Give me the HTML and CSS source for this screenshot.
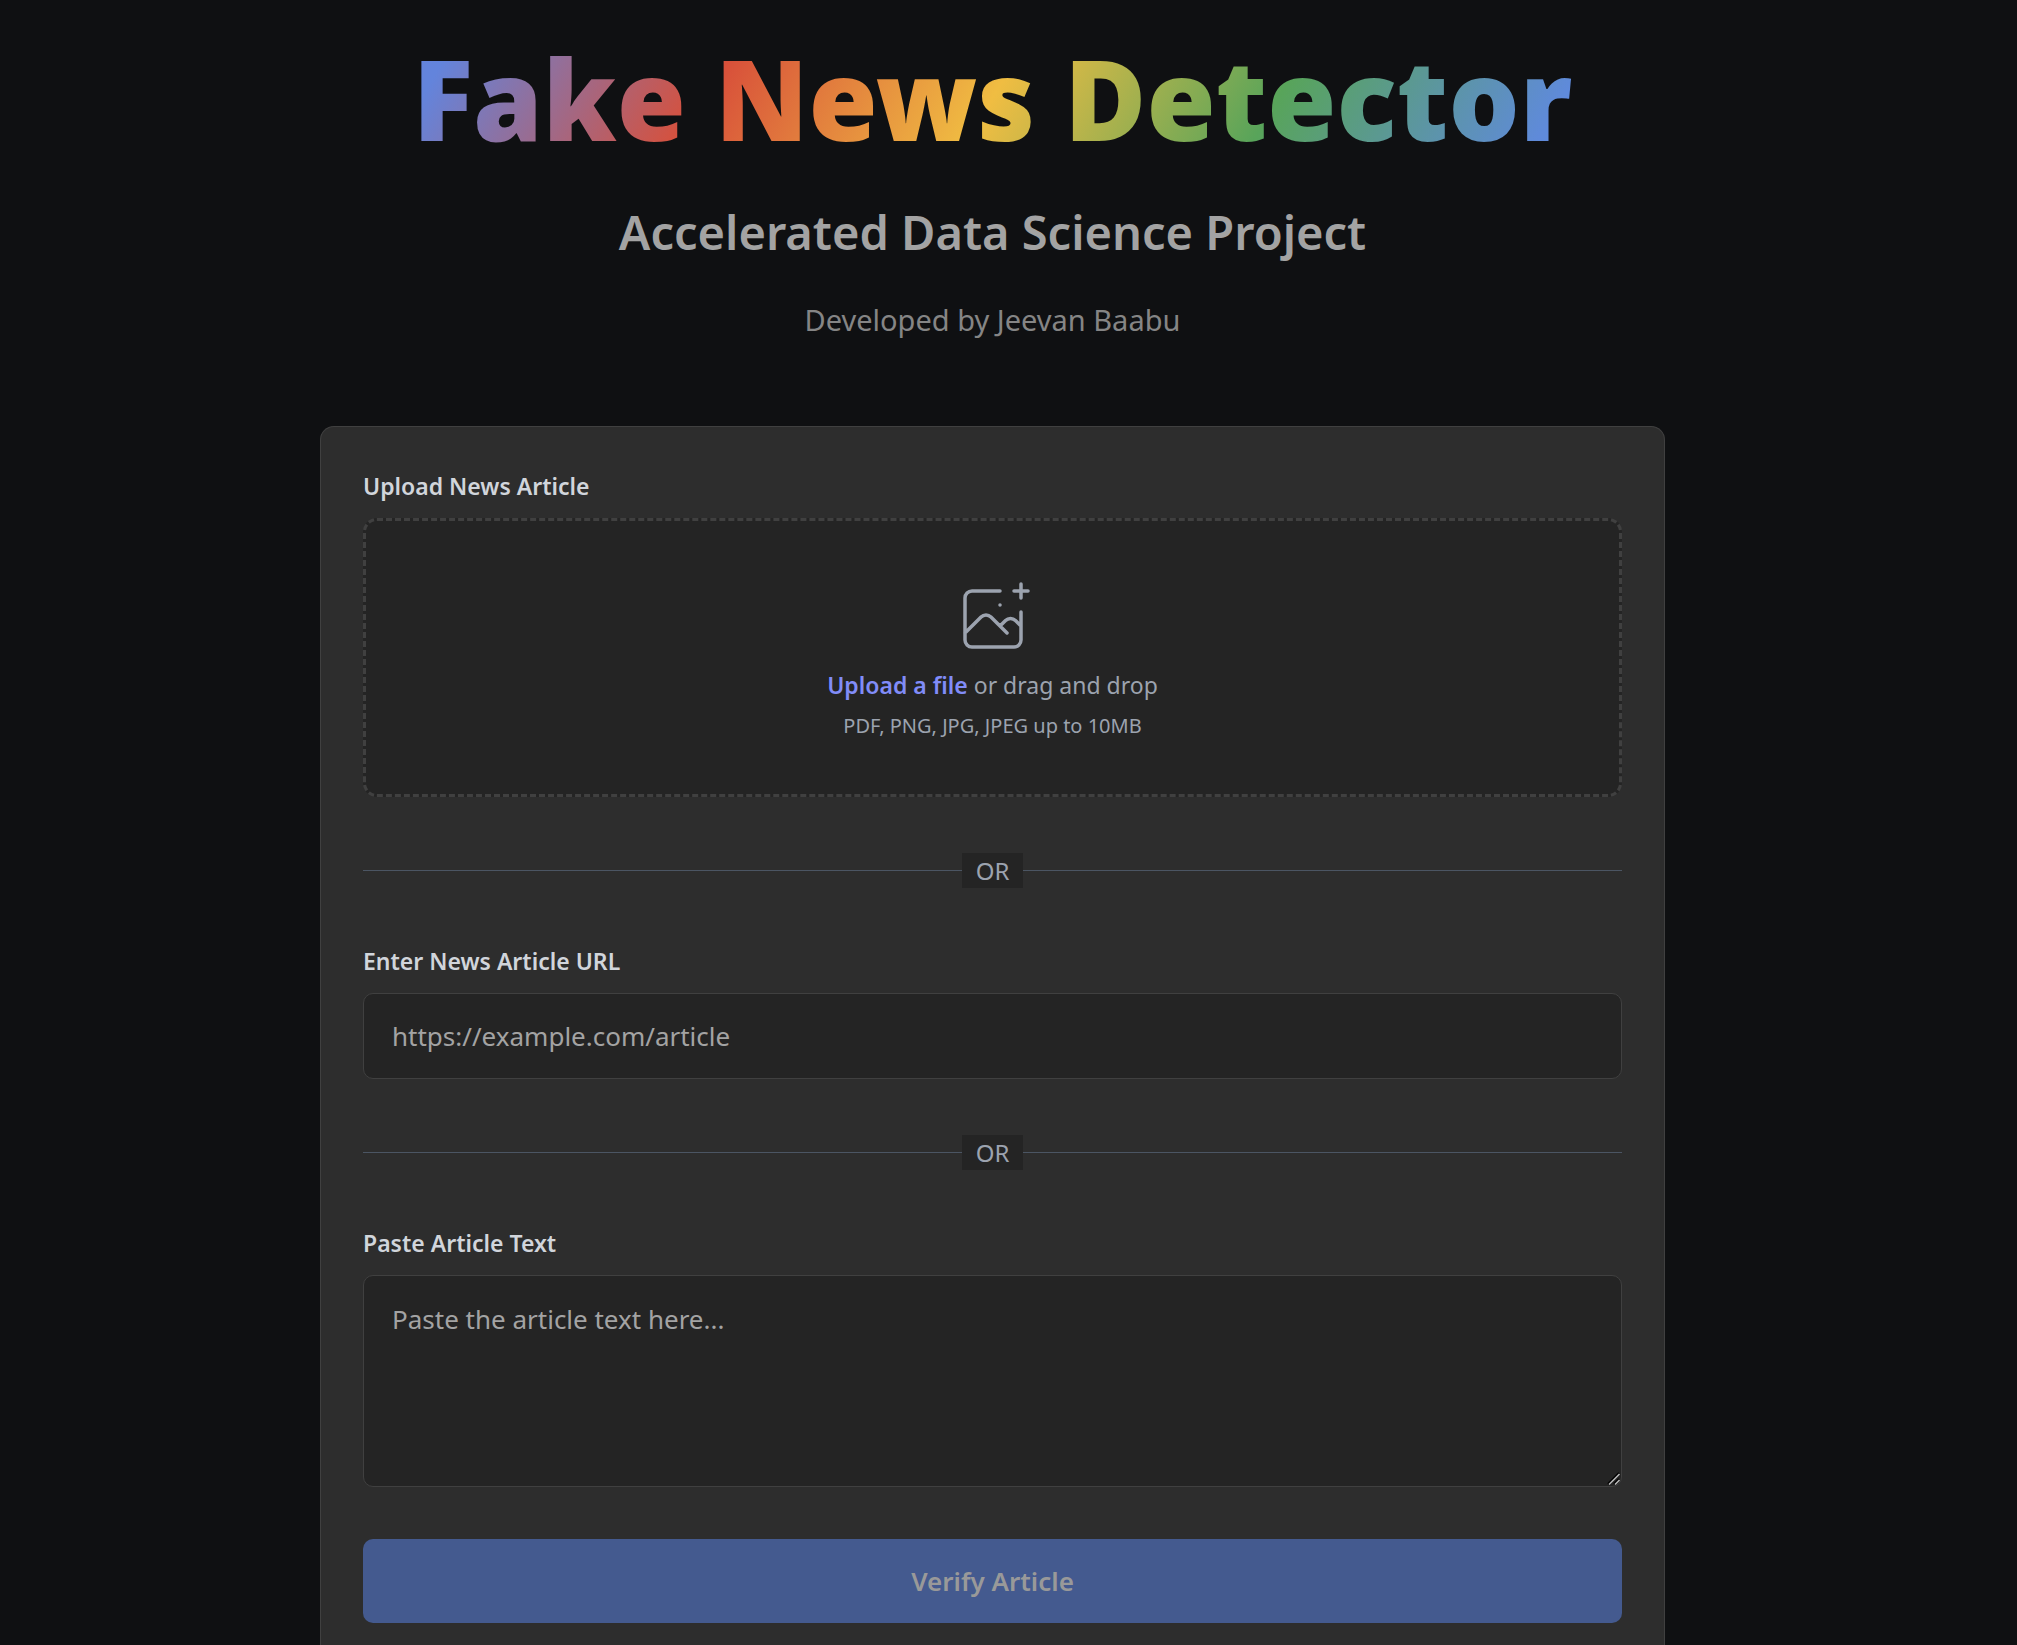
FILE: index.html
```html
<!DOCTYPE html>
<html lang="en">
<head>
<meta charset="utf-8">
<meta name="viewport" content="width=device-width, initial-scale=1">
<title>Fake News Detector</title>
<link rel="stylesheet" href="styles.css">
</head>
<body>
<div class="page">
  <header class="hero">
    <h1 class="hero-title">Fake News Detector</h1>
    <h2 class="hero-subtitle">Accelerated Data Science Project</h2>
    <p class="hero-author">Developed by Jeevan Baabu</p>
  </header>
  <main class="card">
    <form class="form">
      <div class="field">
        <label class="field-label" for="file">Upload News Article</label>
        <div class="dropzone">
          <svg class="dropzone-icon" viewBox="0 0 48 48" fill="none" stroke="currentColor" stroke-width="2" stroke-linecap="round" stroke-linejoin="round" aria-hidden="true">
            <path d="M28 8H12a4 4 0 00-4 4v20m32-12v8m0 0v8a4 4 0 01-4 4H12a4 4 0 01-4-4v-4m32-4l-3.172-3.172a4 4 0 00-5.656 0L28 28M8 32l9.172-9.172a4 4 0 015.656 0L28 28m0 0l4 4m4-24h8m-4-4v8m-12 4h.02"/>
          </svg>
          <p class="dropzone-text"><label class="upload-link" for="file">Upload a file</label> or drag and drop</p>
          <p class="dropzone-hint">PDF, PNG, JPG, JPEG up to 10MB</p>
          <input class="visually-hidden" id="file" type="file" accept=".pdf,.png,.jpg,.jpeg">
        </div>
      </div>
      <div class="divider"><span class="divider-text">OR</span></div>
      <div class="field">
        <label class="field-label" for="url">Enter News Article URL</label>
        <input class="control" id="url" type="url" placeholder="https://example.com/article">
      </div>
      <div class="divider"><span class="divider-text">OR</span></div>
      <div class="field">
        <label class="field-label" for="text">Paste Article Text</label>
        <textarea class="control control-area" id="text" placeholder="Paste the article text here..."></textarea>
      </div>
      <button class="submit" type="submit" disabled>Verify Article</button>
    </form>
  </main>
</div>
</body>
</html>
```
FILE: styles.css
```css
*, *::before, *::after {
  box-sizing: border-box;
}

body {
  margin: 0;
  background: #0f1012;
  color: #d1d5db;
  color-scheme: dark;
  font-family: "Noto Sans", "Open Sans", sans-serif;
}

h1, h2, p {
  margin: 0;
}

.page {
  display: flex;
  flex-direction: column;
  align-items: center;
  min-height: 100vh;
  padding: 26px 32px 0 0;
}

.hero {
  display: flex;
  flex-direction: column;
  align-items: center;
  padding-bottom: 86px;
  text-align: center;
}

.hero-title {
  font-size: 112px;
  font-weight: 900;
  line-height: 144px;
  color: transparent;
  background: linear-gradient(120deg, #6384dc 4%, #d8503a 27%, #f0bd42 50%, #58a45a 73%, #5f8adb 96%);
  -webkit-background-clip: text;
  background-clip: text;
}

.hero-subtitle {
  margin-top: 30px;
  font-size: 47px;
  font-weight: 600;
  line-height: 64px;
  color: #a3a3a3;
}

.hero-author {
  margin-top: 36px;
  font-size: 29px;
  line-height: 40px;
  color: #858585;
}

.card {
  flex: 1;
  width: 100%;
  max-width: 1345px;
  padding: 42px 42px 21px;
  background: #2d2d2d;
  border: 1px solid #404040;
  border-bottom: 0;
  border-radius: 14px 14px 0 0;
}

.form, .field {
  display: flex;
  flex-direction: column;
}

.field-label {
  margin-bottom: 14px;
  font-size: 23px;
  font-weight: 600;
  line-height: 35px;
}

.dropzone {
  display: flex;
  flex-direction: column;
  align-items: center;
  padding: 56px 40px 51px;
  background: #242424;
  border: 3px dashed #404040;
  border-radius: 14px;
  color: #9ca3af;
}

.dropzone-icon {
  width: 84px;
  height: 84px;
}

.dropzone-text {
  margin-top: 7px;
  font-size: 23px;
  line-height: 35px;
}

.upload-link {
  color: #818cf8;
  font-weight: 600;
  cursor: pointer;
}

.dropzone-hint {
  margin-top: 6px;
  font-size: 20px;
  line-height: 34px;
}

.visually-hidden {
  position: absolute;
  width: 1px;
  height: 1px;
  overflow: hidden;
  clip-path: inset(50%);
}

.divider {
  display: flex;
  align-items: center;
  margin: 56px 0;
}

.divider::before,
.divider::after {
  content: "";
  flex: 1;
  height: 1px;
  background: #4b5563;
}

.divider-text {
  padding: 0 14px;
  background: #242424;
  color: #9ca3af;
  font-size: 24px;
  line-height: 35px;
}

.control {
  width: 100%;
  height: 86px;
  padding: 0 28px;
  background: #242424;
  border: 1px solid #404040;
  border-radius: 10px;
  color: #d1d5db;
  font-family: inherit;
  font-size: 26px;
  line-height: 42px;
}

.control::placeholder {
  color: #a3a3a3;
  opacity: 1;
}

.control-area {
  height: 212px;
  padding-top: 22px;
  resize: vertical;
}

.control-area::-webkit-resizer {
  background: url("data:image/svg+xml,%3Csvg xmlns='http://www.w3.org/2000/svg' viewBox='0 0 15 15'%3E%3Cpath d='M2 13 13 2M8 13l5-5' stroke='%23000' stroke-width='2'/%3E%3Cpath d='M3 13.500 13.500 3M9 13.500l4.500-4.500' stroke='%23bbb' stroke-width='1.500'/%3E%3C/svg%3E") right bottom / 15px 15px no-repeat;
}

.submit {
  height: 84px;
  margin-top: 52px;
  background: #445a8f;
  border: 0;
  border-radius: 10px;
  color: #999999;
  font-family: inherit;
  font-size: 26px;
  font-weight: 600;
}
```
